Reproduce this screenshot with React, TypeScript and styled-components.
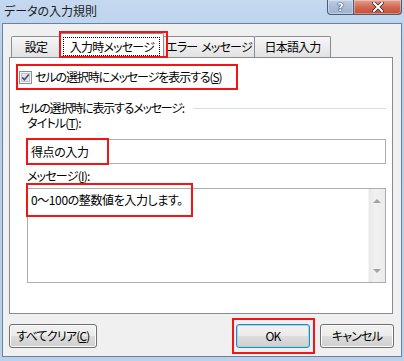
import React from 'react';
import styled, { createGlobalStyle } from 'styled-components';

const GlobalStyle = createGlobalStyle`
  html, body {
    margin: 0;
    padding: 0;
    background: #b9d1ea;
  }
  body {
    font-family: "Noto Sans CJK JP", "Noto Sans", sans-serif;
    font-size: 12px;
    letter-spacing: -0.8px;
    color: #000;
    font-feature-settings: "palt" 1;
  }
`;

const Frame = styled.div`
  width: 404px;
  height: 361px;
  box-sizing: border-box;
  padding: 0 2px 4px 2px;
  background: linear-gradient(#c4d8f0, #b7cee9 60px, #b9d1ea);
  display: flex;
  flex-direction: column;
`;

const TitleBar = styled.div`
  height: 23px;
  display: flex;
  align-items: flex-start;
`;

const TitleText = styled.div`
  flex: 1;
  padding: 4px 0 0 2px;
  line-height: 14px;
  letter-spacing: 0;
  color: #1c1c1c;
`;

const CaptionButton = styled.div<{ $kind: 'help' | 'close' }>`
  height: 15px;
  width: ${(p) => (p.$kind === 'help' ? 27 : 49)}px;
  box-sizing: border-box;
  border: 1px solid #4a5b74;
  border-top: none;
  border-radius: ${(p) => (p.$kind === 'help' ? '0 0 0 4px' : '0 0 4px 0')};
  margin-left: ${(p) => (p.$kind === 'close' ? -1 : 0)}px;
  background: ${(p) =>
    p.$kind === 'help'
      ? 'linear-gradient(#bccde3, #a6bad5 60%, #9fb4d1)'
      : 'linear-gradient(#e3a08f, #d16a55 50%, #c44c35)'};
  box-shadow: inset 0 0 0 1px rgba(255, 255, 255, 0.35);
  display: flex;
  align-items: center;
  justify-content: center;
  color: #fff;
  font-family: "DejaVu Sans", sans-serif;
  font-weight: bold;
  font-size: 11px;
  letter-spacing: 0;
  line-height: 13px;
  text-shadow: 0 0 1px #233a5a, 0 0 1px #233a5a, 0 0 1px #233a5a;
`;

const Client = styled.div`
  flex: 1;
  background: #f0f0f0;
  border: 1px solid #6a819f;
  padding: 9px 0 8px 0;
  display: flex;
  flex-direction: column;
`;

const TabStrip = styled.div`
  height: 24px;
  display: flex;
  align-items: flex-end;
  padding-left: 2px;
  margin-left: 6px;
`;

const Tab = styled.div<{ $w: number; $first?: boolean }>`
  flex: 0 0 ${(p) => p.$w}px;
  min-width: 0;
  height: 21px;
  box-sizing: border-box;
  border: 1px solid #898c95;
  border-bottom: none;
  border-radius: 2px 2px 0 0;
  margin-left: ${(p) => (p.$first ? 0 : -1)}px;
  background: linear-gradient(#f7f7f7, #ececec 50%, #e2e2e2);
  display: flex;
  align-items: center;
  justify-content: center;
  line-height: 14px;
  white-space: pre;
`;

const ActiveTab = styled.div`
  position: relative;
  z-index: 2;
  flex: 0 0 105px;
  min-width: 0;
  height: 25px;
  box-sizing: border-box;
  margin: 0 -1px -1px -2px;
  border: 1px solid #898c95;
  border-bottom: none;
  border-radius: 2px 2px 0 0;
  background: #fff;
  display: flex;
  justify-content: center;
  padding-top: 3px;
`;

const FocusRect = styled.span`
  height: 19px;
  box-sizing: border-box;
  border: 1px dotted #000;
  padding: 0 5px 0 6px;
  line-height: 17px;
  white-space: nowrap;
`;

const Mark = styled.span<{ $t: number; $l: number; $w?: number; $h?: number; $r?: number; $b?: number }>`
  position: absolute;
  top: ${(p) => p.$t}px;
  left: ${(p) => p.$l}px;
  ${(p) => (p.$w !== undefined ? `width: ${p.$w}px;` : `right: ${p.$r}px;`)}
  ${(p) => (p.$h !== undefined ? `height: ${p.$h}px;` : `bottom: ${p.$b}px;`)}
  box-sizing: border-box;
  border: 2px solid #f31414;
  pointer-events: none;
  z-index: 3;
`;

const Panel = styled.div`
  height: 257px;
  margin: 0 8px 0 6px;
  box-sizing: border-box;
  border: 1px solid #898c95;
  background: #fff;
  padding-top: 6px;
  display: flex;
  flex-direction: column;
`;

const CheckRow = styled.label`
  margin-left: 6px;
  width: 222px;
  height: 26px;
  box-sizing: border-box;
  border: 2px solid #f31414;
  display: flex;
  align-items: center;
  gap: 3px;
  padding-left: 1px;
  line-height: 14px;
  letter-spacing: -1.1px;
  white-space: nowrap;
  svg {
    flex-shrink: 0;
  }
`;

const GroupRow = styled.div`
  margin: 11px 6px 0 9px;
  height: 14px;
  display: flex;
  align-items: center;
  line-height: 14px;
  letter-spacing: -1.2px;
  white-space: nowrap;
`;

const GroupLine = styled.div`
  flex: 1;
  height: 1px;
  margin-left: 9px;
  background: #d5dfe5;
`;

const Form = styled.div`
  padding: 0 6px 0 17px;
  display: flex;
  flex-direction: column;
`;

const FieldLabel = styled.div<{ $top: number }>`
  margin-top: ${(p) => p.$top}px;
  height: 14px;
  line-height: 14px;
  white-space: nowrap;
`;

const InputBox = styled.div`
  position: relative;
  margin-top: 9px;
  height: 25px;
  box-sizing: border-box;
  border: 1px solid #abadb3;
  padding: 0 3px;
  line-height: 23px;
  letter-spacing: -0.4px;
`;

const MemoBox = styled.div`
  position: relative;
  margin-top: 5px;
  height: 95px;
  box-sizing: border-box;
  border: 1px solid #abadb3;
  display: flex;
`;

const MemoText = styled.div`
  flex: 1;
  padding: 4px 3px;
  line-height: 14px;
  letter-spacing: -0.4px;
`;

const ScrollBar = styled.div`
  width: 16px;
  background: linear-gradient(90deg, #e9e9e9, #f1f1f1 40%, #ececec);
  border-left: 1px solid #f4f4f4;
  display: flex;
  flex-direction: column;
  align-items: center;
  justify-content: space-between;
  padding: 10px 0 9px;
`;

const Arrow = styled.span<{ $dir: 'up' | 'down' }>`
  width: 0;
  height: 0;
  border-left: 4px solid transparent;
  border-right: 4px solid transparent;
  ${(p) => (p.$dir === 'up' ? 'border-bottom' : 'border-top')}: 4px solid #a3a3a3;
`;

const ButtonRow = styled.div`
  margin-top: 10px;
  height: 24px;
  padding: 0 7px 0 6px;
  display: flex;
  gap: 10px;
`;

const Spacer = styled.div`
  flex: 1;
`;

const MarkHolder = styled.div`
  position: relative;
  display: flex;
`;

const Button = styled.button<{ $w: number; $default?: boolean }>`
  width: ${(p) => p.$w}px;
  height: 24px;
  box-sizing: border-box;
  border: 1px solid ${(p) => (p.$default ? '#3c7fb1' : '#707070')};
  border-radius: 3px;
  background: linear-gradient(#f2f2f2, #ebebeb 50%, #dddddd 51%, #cfcfcf);
  box-shadow: inset 0 0 0 1px ${(p) => (p.$default ? '#8fdcf9' : '#fbfbfb')};
  font-family: inherit;
  font-size: 12px;
  letter-spacing: -0.8px;
  font-feature-settings: "palt" 1;
  color: #000;
  padding: 0;
  line-height: 22px;
  white-space: nowrap;
`;

const U = styled.span`
  text-decoration: underline;
`;

const CheckBox = () => (
  <svg width="13" height="13" viewBox="0 0 13 13">
    <rect x="0.5" y="0.5" width="12" height="12" fill="#f4f4f4" stroke="#8e8f8f" />
    <rect x="2.5" y="2.5" width="8" height="8" fill="#e2e4e8" stroke="#c2c5cc" />
    <path d="M3.2 6.4 L5.4 8.8 L9.8 3.4" fill="none" stroke="#45527a" strokeWidth="1.6" />
  </svg>
);

const CloseGlyph = () => (
  <svg width="12" height="10" viewBox="0 0 12 10">
    <path d="M2 1 L10 9 M10 1 L2 9" stroke="#3b2a2a" strokeWidth="3.6" strokeLinecap="square" />
    <path d="M2 1 L10 9 M10 1 L2 9" stroke="#fff" strokeWidth="2" strokeLinecap="square" />
  </svg>
);

const App: React.FC = () => {
  return (
    <>
      <GlobalStyle />
      <Frame>
        <TitleBar>
          <TitleText>データの入力規則</TitleText>
          <CaptionButton $kind="help">?</CaptionButton>
          <CaptionButton $kind="close">
            <CloseGlyph />
          </CaptionButton>
        </TitleBar>
        <Client>
          <TabStrip>
            <Tab $w={50} $first>設定</Tab>
            <ActiveTab>
              <FocusRect>入力時メッセージ</FocusRect>
              <Mark $t={-3} $l={-1} $r={-5} $b={0} />
            </ActiveTab>
            <Tab $w={92} $first>エラー  メッセージ</Tab>
            <Tab $w={77}>日本語入力</Tab>
          </TabStrip>
          <Panel>
            <CheckRow>
              <CheckBox />
              <span>
                セルの選択時にメッセージを表示する(<U>S</U>)
              </span>
            </CheckRow>
            <GroupRow>
              セルの選択時に表示するメッセージ:
              <GroupLine />
            </GroupRow>
            <Form>
              <FieldLabel $top={1}>
                タイトル(<U>T</U>):
              </FieldLabel>
              <InputBox>
                得点の入力
                <Mark $t={-2} $l={-2} $w={83} $h={27} />
              </InputBox>
              <FieldLabel $top={5}>
                メッセージ(<U>I</U>):
              </FieldLabel>
              <MemoBox>
                <MemoText>0〜100の整数値を入力します。</MemoText>
                <ScrollBar>
                  <Arrow $dir="up" />
                  <Arrow $dir="down" />
                </ScrollBar>
                <Mark $t={-6} $l={-2} $w={167} $h={34} />
              </MemoBox>
            </Form>
          </Panel>
          <ButtonRow>
            <Button $w={88}>
              すべてクリア(<U>C</U>)
            </Button>
            <Spacer />
            <MarkHolder>
              <Button $w={74} $default>
                OK
              </Button>
              <Mark $t={-6} $l={-4} $r={-5} $b={-6} />
            </MarkHolder>
            <Button $w={74}>キャンセル</Button>
          </ButtonRow>
        </Client>
      </Frame>
    </>
  );
};

export default App;
